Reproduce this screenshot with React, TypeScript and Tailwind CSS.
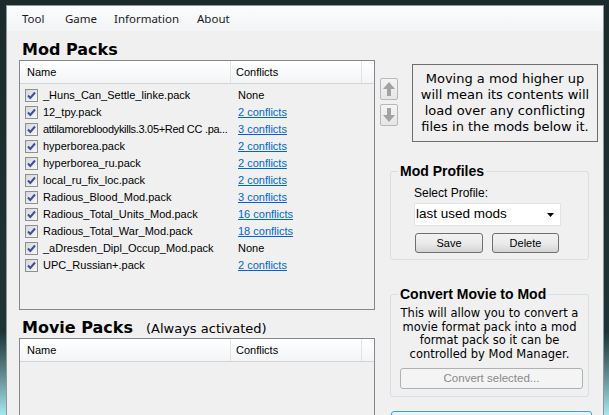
import React from 'react';

const mods: [string, string][] = [
  ['_Huns_Can_Settle_linke.pack', 'None'],
  ['12_tpy.pack', '2 conflicts'],
  ['attilamorebloodykills.3.05+Red CC .pa...', '3 conflicts'],
  ['hyperborea.pack', '2 conflicts'],
  ['hyperborea_ru.pack', '2 conflicts'],
  ['local_ru_fix_loc.pack', '2 conflicts'],
  ['Radious_Blood_Mod.pack', '3 conflicts'],
  ['Radious_Total_Units_Mod.pack', '16 conflicts'],
  ['Radious_Total_War_Mod.pack', '18 conflicts'],
  ['_aDresden_Dipl_Occup_Mod.pack', 'None'],
  ['UPC_Russian+.pack', '2 conflicts'],
];

const tahoma = "font-['Liberation_Sans',Arial,sans-serif]";
const verdana = "font-['DejaVu_Sans',Verdana,sans-serif]";

const CheckBox = () => (
  <span className="w-[13px] h-[13px] border border-[#8e8f8f] bg-linear-to-br from-[#d6d7da] to-[#f7f7f7] flex items-center justify-center shrink-0">
    <svg width="11" height="11" viewBox="0 0 11 11">
      <path d="M2 5.5 L4.3 8 L9 2.5" stroke="#3f4f96" strokeWidth="2" fill="none" />
    </svg>
  </span>
);

const ListHeader = () => (
  <div className={`h-[23px] flex border-b border-[#d5d5d5] bg-linear-to-b from-white to-[#f3f4f6] text-[11px] text-black ${tahoma}`}>
    <div className="w-[211px] border-r border-[#e2e3e5] pl-[7px] flex items-center">Name</div>
    <div className="w-[131px] border-r border-[#e2e3e5] pl-[5px] flex items-center">Conflicts</div>
    <div className="flex-1" />
  </div>
);

const ArrowButton = ({ down }: { down?: boolean }) => (
  <div className="w-[18px] h-[22px] border border-[#b8b8b8] rounded-[2px] bg-linear-to-b from-[#f4f4f4] to-[#e6e6e6] flex items-center justify-center">
    <svg width="14" height="16" viewBox="0 0 14 16" className={down ? 'rotate-180' : ''}>
      <path d="M7 1 L13 8 H9 V15 H5 V8 H1 Z" fill="#a3a3a3" />
    </svg>
  </div>
);

const WinButton = ({ label, className }: { label: string; className: string }) => (
  <div
    className={`h-[20px] border border-[#707070] rounded-[3px] bg-linear-to-b from-[#f2f2f2] via-[#ebebeb] to-[#d4d4d4] flex items-center justify-center text-[11px] text-black ${tahoma} ${className}`}
  >
    {label}
  </div>
);

export default function App() {
  return (
    <div className="w-[609px] h-[415px] overflow-hidden bg-linear-to-b from-[#1c2a2b] via-[#1f3436] via-80% to-[#a6e8ee] pt-[5px] pl-[6px] pr-[5px]">
      <div className="h-full bg-[#f0f0f0] border-l border-t border-r border-[#8a9a9c]">
        {/* menu */}
        <div className="h-[25px] flex items-center pl-[15px] bg-linear-to-b from-[#fbfcfd] to-[#f3f4f6] text-[11.5px] text-[#1a1a1a] font-['Noto_Sans',sans-serif]">
          <span className="w-[43px]">Tool</span>
          <span className="w-[49px]">Game</span>
          <span className="w-[83px]">Information</span>
          <span>About</span>
        </div>

        <div className="flex pl-[12px]">
          {/* left */}
          <div className="w-[356px] flex flex-col">
            <div className={`mt-[9px] h-[20px] leading-[20px] pl-[3px] text-[16px] font-bold text-black ${verdana}`}>
              Mod Packs
            </div>
            <div className="h-[250px] border border-[#828790] bg-[#f0f0f0]">
              <ListHeader />
              <div className={`pt-[3px] text-[11px] text-black ${tahoma}`}>
                {mods.map(([name, conf]) => (
                  <div key={name} className="h-[17px] flex items-center">
                    <div className="w-[212px] flex items-center pl-[5px] whitespace-nowrap overflow-hidden">
                      <CheckBox />
                      <span className={name.endsWith('...') ? 'ml-[5px] tracking-[-0.3px]' : 'ml-[5px]'}>{name}</span>
                    </div>
                    <span className={conf === 'None' ? 'pl-[6px]' : 'pl-[6px] text-[#0066cc] underline'}>{conf}</span>
                  </div>
                ))}
              </div>
            </div>

            <div className={`mt-[8px] h-[20px] leading-[20px] pl-[3px] flex items-baseline text-black ${verdana}`}>
              <span className="text-[16px] font-bold">Movie Packs</span>
              <span className="ml-[13px] text-[13px]">(Always activated)</span>
            </div>
            <div className="h-[120px] border border-[#828790] bg-[#f0f0f0]">
              <ListHeader />
            </div>
          </div>

          {/* right */}
          <div className="ml-[5px] w-[218px] pt-[33px] flex flex-col">
            <div className="flex items-start">
              <div className="mt-[14px] flex flex-col gap-[4px]">
                <ArrowButton />
                <ArrowButton down />
              </div>
              <div className={`ml-[14px] w-[186px] h-[78px] border border-[#6e6e6e] text-center pt-[6px] leading-[16px] text-[13px] text-black ${verdana}`}>
                Moving a mod higher up
                <br />
                will mean its contents will
                <br />
                load over any conflicting
                <br />
                files in the mods below it.
              </div>
            </div>

            <fieldset className="mt-[21px] ml-[10px] w-[199px] border border-[#d5dfe5] rounded-[3px] pb-[6px]">
              <legend className={`ml-[7px] px-[2px] text-[14px] leading-[16px] font-bold text-black ${tahoma}`}>Mod Profiles</legend>
              <div className={`pl-[23px] pt-[7px] text-[12px] leading-[14px] text-black ${tahoma}`}>Select Profile:</div>
              <div className={`ml-[23px] mt-[3px] w-[147px] h-[23px] bg-white border border-[#e3e3e3] flex items-center justify-between pl-[1px] pr-[6px] text-[13.5px] text-black ${tahoma}`}>
                <span>last used mods</span>
                <svg width="7" height="4" viewBox="0 0 7 4">
                  <path d="M0 0 H7 L3.5 4 Z" fill="#000" />
                </svg>
              </div>
              <div className="ml-[24px] mt-[7px] flex gap-[9px]">
                <WinButton label="Save" className="w-[68px]" />
                <WinButton label="Delete" className="w-[67px]" />
              </div>
            </fieldset>

            <fieldset className="mt-[26px] ml-[10px] w-[199px] border border-[#d5dfe5] rounded-[3px] pb-[7px]">
              <legend className={`ml-[7px] px-[2px] text-[14px] leading-[16px] font-bold text-black ${tahoma}`}>Convert Movie to Mod</legend>
              <div className={`pt-[5px] text-center text-[11.5px] leading-[13.5px] text-black ${verdana}`}>
                This will allow you to convert a
                <br />
                movie format pack into a mod
                <br />
                format pack so it can be
                <br />
                controlled by Mod Manager.
              </div>
              <div className={`ml-[9px] mt-[7px] w-[183px] h-[21px] border border-[#adb2b5] rounded-[3px] bg-[#f4f4f4] flex items-center justify-center text-[11.5px] text-[#8a8a8a] ${tahoma}`}>
                Convert selected...
              </div>
            </fieldset>

            <div className="mt-[14px] ml-[11px] w-[201px] h-[12px] border border-[#3c9fd8] rounded-[3px] bg-linear-to-b from-[#eaf6fd] to-[#d9f0fc]" />
          </div>
        </div>
      </div>
    </div>
  );
}
